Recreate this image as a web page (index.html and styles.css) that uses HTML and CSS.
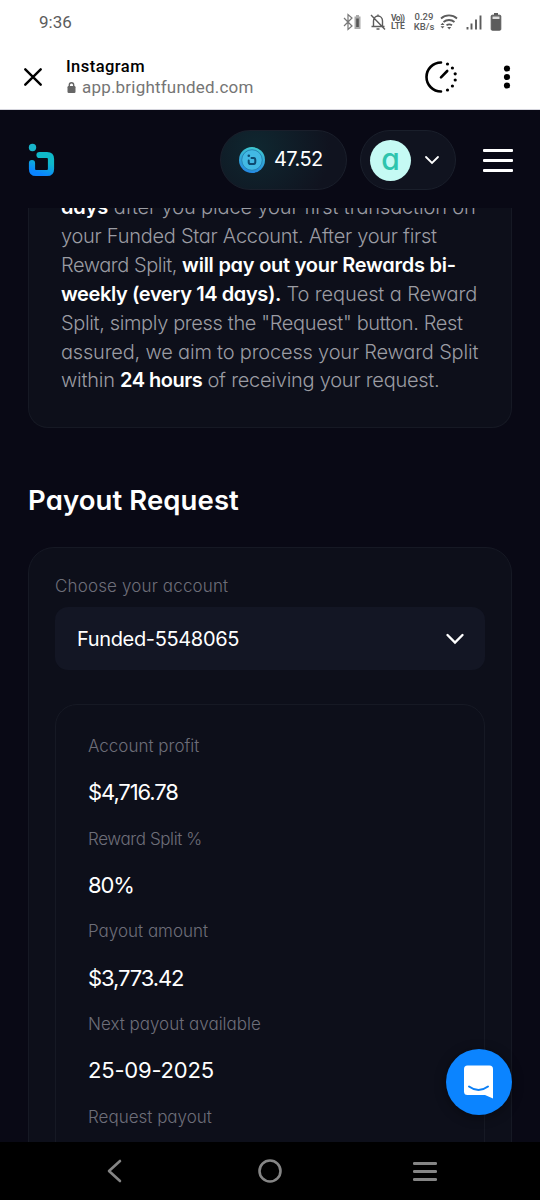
FILE: index.html
```html
<!DOCTYPE html>
<html lang="en">
<head>
    <meta charset="UTF-8">
    <meta name="viewport" content="width=device-width, initial-scale=1.0">
    <title>BrightFunded - Payout Request</title>
    <link rel="stylesheet" href="styles.css">
</head>
<body>

<div class="status-bar">
    <span class="clock">9:36</span>
    <div class="status-icons">
        <svg class="bt" width="18" height="18" viewBox="0 0 18 18">
            <path d="M1 5l8 8-4 3.500V1.500L9 5l-8 8" fill="none" stroke="#777" stroke-width="1.200"/>
            <path d="M13 2h3v1.500h1.500v12.500h-6V3.500H13z" fill="#aaa"/>
            <rect x="13.200" y="5.500" width="2.600" height="8.500" fill="#555"/>
        </svg>
        <svg class="bell" width="16" height="18" viewBox="0 0 16 18">
            <path d="M3.500 13V8c0-3 2-5 4.500-5s4.500 2 4.500 5v5M1.500 13.500h13M8 3V1.500M6.500 16h3M1 2l14 14.500" fill="none" stroke="#5c5c5c" stroke-width="1.400"/>
        </svg>
        <span class="volte"><span>Vo))</span><br>LTE</span>
        <span class="speed">0.29<br>KB/s</span>
        <svg class="wifi" width="18" height="16" viewBox="0 0 18 16">
            <g fill="none" stroke="#5c5c5c" stroke-width="1.800">
                <path d="M1 4.500a12 12 0 0 1 16 0M3.500 8a8.500 8.500 0 0 1 11 0M6.500 11.300a5 5 0 0 1 5.500 0"/>
            </g>
            <path d="M7.200 13h4l-2 2.500z M.5 11L2.500 8.700 4.500 11z M.5 12.200h4L2.500 14.500z" fill="#5c5c5c"/>
        </svg>
        <svg class="signal" width="16" height="15" viewBox="0 0 16 15">
            <path d="M1.500 12v2.500M5.500 8.500v6M10 4.500v10M14.500 .5v14" stroke="#5c5c5c" stroke-width="1.900"/>
        </svg>
        <svg class="battery" width="12" height="18" viewBox="0 0 12 18">
            <path d="M4 0h4v2H4z" fill="#5c5c5c"/>
            <rect x="1.200" y="2.200" width="9.600" height="15" rx="1" fill="#5c5c5c" stroke="#5c5c5c"/>
            <path d="M2.500 3.500h7v2.500h-7z" fill="#ddd"/>
        </svg>
    </div>
</div>

<div class="browser-bar">
    <svg class="close" width="18" height="18" viewBox="0 0 18 18">
        <path d="M1.300 1.300l15.400 15.400M16.700 1.300L1.300 16.700" stroke="#000" stroke-width="2.400" stroke-linecap="round"/>
    </svg>
    <div class="site">
        <div class="site-name">Instagram</div>
        <div class="site-url">
            <svg width="9" height="11" viewBox="0 0 9 11">
                <rect x=".5" y="4" width="8" height="7" rx="1.200" fill="#666"/>
                <path d="M2.300 5V3a2.200 2.200 0 0 1 4.400 0v2" fill="none" stroke="#666" stroke-width="1.400"/>
            </svg>
            <span>app.brightfunded.com</span>
        </div>
    </div>
    <svg class="gauge" width="34" height="34" viewBox="0 0 34 34">
        <path d="M17 2.500A14.500 14.500 0 0 0 17 31.500M17 17.300l6.200-6.300" fill="none" stroke="#000" stroke-width="2.600" stroke-linecap="round"/>
        <g fill="#000">
            <circle cx="23.500" cy="4" r="1.600"/>
            <circle cx="28.400" cy="8" r="1.600"/>
            <circle cx="31.200" cy="13.800" r="1.600"/>
            <circle cx="31.200" cy="20" r="1.600"/>
            <circle cx="28.400" cy="26" r="1.600"/>
            <circle cx="23.500" cy="30" r="1.600"/>
        </g>
    </svg>
    <svg class="dots" width="8" height="24" viewBox="0 0 8 24">
        <circle cx="4" cy="3.500" r="3.100"/>
        <circle cx="4" cy="12" r="3.100"/>
        <circle cx="4" cy="20.500" r="3.100"/>
    </svg>
</div>

<header class="header">
    <svg class="logo" width="27" height="34" viewBox="0 0 27 34">
        <defs>
            <linearGradient id="brand" x1="0.700" y1="0" x2="0.300" y2="1">
                <stop offset="0.300" stop-color="#0fb9c9"/>
                <stop offset="1" stop-color="#0a84ff"/>
            </linearGradient>
        </defs>
        <circle cx="4.500" cy="4.500" r="3.700" fill="#18b5cb"/>
        <path d="M11.500 12H19q4 0 4 4v10q0 4-4 4H8q-4 0-4-4v-6" fill="none" stroke="url(#brand)" stroke-width="6.200" stroke-linecap="round"/>
    </svg>

    <div class="pill coins">
        <svg width="26" height="26" viewBox="0 0 26 26">
            <defs>
                <linearGradient id="coin" x1="0.600" y1="0" x2="0.400" y2="1">
                    <stop offset="0" stop-color="#3fc9cf"/>
                    <stop offset="1" stop-color="#2487e2"/>
                </linearGradient>
            </defs>
            <circle cx="13" cy="13" r="13" fill="url(#coin)"/>
            <circle cx="13" cy="13" r="10.300" fill="#42b9e4" stroke="#2785b5" stroke-width="1"/>
            <circle cx="9.800" cy="8.700" r="1.300" fill="#0d4a70"/>
            <path d="M12.500 11h2q1.800 0 1.800 1.800v2.400q0 1.800-1.800 1.800h-3q-1.800 0-1.800-1.800v-1.600" fill="none" stroke="#0d4a70" stroke-width="2" stroke-linecap="round"/>
        </svg>
        <span>47.52</span>
    </div>

    <div class="pill user">
        <span class="avatar">a</span>
        <svg width="16" height="10" viewBox="0 0 16 10">
            <path d="M2 2l6 6 6-6" fill="none" stroke="#fff" stroke-width="1.800" stroke-linecap="round"/>
        </svg>
    </div>

    <div class="menu">
        <span></span>
        <span></span>
        <span></span>
    </div>
</header>

<main class="content">
    <section class="card info">
        <p class="l1"><b>days</b> after you place your first transaction on</p>
        <p class="l2">your Funded Star Account. After your first</p>
        <p class="l3">Reward Split, <b>will pay out your Rewards bi-</b></p>
        <p class="l4"><b>weekly (every 14 days).</b> To request a Reward</p>
        <p class="l5">Split, simply press the "Request" button. Rest</p>
        <p class="l6">assured, we aim to process your Reward Split</p>
        <p class="l7">within <b>24 hours</b> of receiving your request.</p>
    </section>

    <h2>Payout Request</h2>

    <section class="card payout">
        <div class="field-label">Choose your account</div>
        <div class="select">
            <span>Funded-5548065</span>
            <svg width="20" height="14" viewBox="0 0 20 14">
                <path d="M2.500 3l7.500 7.500L17.500 3" fill="none" stroke="#fff" stroke-width="2.400" stroke-linecap="round"/>
            </svg>
        </div>
        <dl class="details">
            <dt>Account profit</dt>
            <dd>$4,716.78</dd>
            <dt class="split">Reward Split %</dt>
            <dd>80%</dd>
            <dt>Payout amount</dt>
            <dd>$3,773.42</dd>
            <dt>Next payout available</dt>
            <dd class="date">25-09-2025</dd>
            <dt>Request payout</dt>
        </dl>
    </section>

    <div class="chat">
        <svg width="30" height="34" viewBox="0 0 30 34">
            <path d="M3.500 .5h22q3.500 0 3.500 3.500v29.500L21 30H3.500Q0 30 0 26.500V4Q0 .5 3.500 .5z" fill="#fff"/>
            <path d="M5 21.500q9.500 7 19 0" fill="none" stroke="#0b7ff5" stroke-width="2" stroke-linecap="round"/>
        </svg>
    </div>
</main>

<nav class="nav-bar">
    <svg width="24" height="24" viewBox="0 0 24 24">
        <path d="M17 2L6 12l11 10" fill="none" stroke="#858585" stroke-width="2.600" stroke-linecap="round" stroke-linejoin="round"/>
    </svg>
    <svg width="24" height="24" viewBox="0 0 24 24">
        <circle cx="12" cy="12" r="10.500" fill="none" stroke="#858585" stroke-width="2.600"/>
    </svg>
    <svg width="24" height="24" viewBox="0 0 24 24">
        <path d="M1.300 4.500h21.400M1.300 12.500h21.400M1.300 20.500h21.400" stroke="#858585" stroke-width="2.800" stroke-linecap="round"/>
    </svg>
</nav>

</body>
</html>
```
FILE: styles.css
```css
* {
    box-sizing: border-box;
}
body {
    margin: 0;
    height: 1200px;
    display: flex;
    flex-direction: column;
    overflow: hidden;
    background: #090915;
    color: #fff;
    font-family: Inter, "Liberation Sans", sans-serif;
    font-feature-settings: "cv11";
}
svg {
    display: block;
    flex-shrink: 0;
}

/* phone status bar */
.status-bar {
    height: 44px;
    padding: 0 38px 0 39px;
    display: flex;
    align-items: center;
    justify-content: space-between;
    background: #fff;
    color: #5c5c5c;
    font-family: Roboto, sans-serif;
}
.clock {
    font-size: 17px;
}
.status-icons {
    display: flex;
    align-items: center;
}
.bell {
    margin-left: 9px;
}
.volte {
    margin-left: 5px;
    width: 16px;
    font-size: 8.5px;
    font-weight: 700;
    line-height: 8px;
}
.volte span {
    letter-spacing: -0.7px;
}
.speed {
    margin-left: 6px;
    width: 22px;
    font-size: 9.5px;
    font-weight: 500;
    line-height: 10px;
    text-align: center;
    white-space: nowrap;
}
.wifi {
    margin-left: 5px;
}
.signal {
    margin-left: 8px;
}
.battery {
    margin-left: 8px;
}

/* in-app browser bar */
.browser-bar {
    height: 66px;
    padding: 0 29px 0 24px;
    display: flex;
    align-items: center;
    background: #fff;
    border-bottom: 1px solid #d5d5dd;
    color: #000;
    font-family: Roboto, sans-serif;
}
.site {
    flex: 1;
    margin-left: 24px;
}
.site-name {
    font-size: 16.5px;
    font-weight: 500;
    line-height: 21px;
    letter-spacing: 0.45px;
}
.site-url {
    display: flex;
    align-items: center;
    gap: 6px;
    padding-left: 1px;
    color: #757575;
    font-size: 17px;
    line-height: 21px;
    letter-spacing: 0.2px;
}
.dots {
    margin-left: 45px;
}

/* app header */
.header {
    height: 98px;
    flex-shrink: 0;
    padding: 2px 27px 0 28px;
    display: flex;
    align-items: center;
    background: #090915;
}
.logo {
    margin-right: auto;
}
.pill {
    height: 60px;
    display: flex;
    align-items: center;
    border: 1px solid #1a1f2b;
    border-radius: 30px;
    background: #10131f;
}
.coins {
    width: 127px;
    padding-left: 18px;
    gap: 9px;
    background: radial-gradient(circle at 28% 30%, #0f2730, #10131f 75%);
    font-size: 20px;
    line-height: 24px;
    letter-spacing: -0.6px;
}
.coins span {
    padding-bottom: 2px;
}
.user {
    width: 96px;
    margin: 0 27px 0 13px;
    padding-left: 9px;
    gap: 13px;
}
.avatar {
    width: 41px;
    height: 41px;
    border-radius: 50%;
    background: #c5faf4;
    color: #2fc4ae;
    font-size: 30px;
    font-weight: 500;
    line-height: 38px;
    text-align: center;
}
.menu {
    width: 30px;
    display: flex;
    flex-direction: column;
    gap: 7px;
}
.menu span {
    height: 3px;
    border-radius: 1px;
    background: #fff;
}

/* page */
.content {
    flex: 1;
    min-height: 0;
    overflow: hidden;
    position: relative;
    padding: 0 28px;
}
.card {
    border: 1px solid #161924;
    background: #0d0f1a;
}
.info {
    height: 235px;
    margin-top: -15px;
    padding-left: 32px;
    border-top: 0;
    border-radius: 0 0 20px 20px;
    color: #9b9ca3;
    font-size: 20px;
    font-weight: 300;
    line-height: 28.9px;
}
.info p {
    margin: 0;
    white-space: nowrap;
}
.info b {
    color: #fff;
    font-weight: 600;
}
.l1 {
    letter-spacing: -0.13px;
}
.l2 {
    letter-spacing: -0.27px;
}
.l3 {
    letter-spacing: -0.45px;
}
.l3 b {
    letter-spacing: -0.25px;
}
.l4 {
    letter-spacing: -0.1px;
}
.l4 b {
    letter-spacing: -0.4px;
}
.l5 {
    letter-spacing: -0.36px;
}
.l6 {
    letter-spacing: -0.19px;
}
.l7 {
    letter-spacing: -0.25px;
}
.l7 b {
    letter-spacing: -0.5px;
}
h2 {
    margin: 52px 0 0;
    font-size: 27.5px;
    font-weight: 600;
    line-height: 40px;
    letter-spacing: 0.1px;
}
.payout {
    margin-top: 27px;
    height: 700px;
    padding: 25px 26px 0;
    border-radius: 26px;
}
.field-label,
.details dt {
    color: #6d6e79;
    font-size: 17px;
    font-weight: 300;
}
.field-label {
    line-height: 26px;
    letter-spacing: 0.15px;
}
.select {
    height: 63px;
    margin-top: 8px;
    padding: 0 20px 0 22px;
    display: flex;
    align-items: center;
    justify-content: space-between;
    border-radius: 13px;
    background: #131624;
    font-size: 20px;
    letter-spacing: -0.35px;
}
.details {
    height: 600px;
    margin: 34px 0 0;
    padding: 18px 32px 0;
    border: 1px solid #161924;
    border-radius: 22px;
    line-height: 46.35px;
}
.details dd {
    margin: 0;
    font-size: 22px;
    letter-spacing: -1.1px;
}
.details .split {
    letter-spacing: -0.4px;
}
.details .date {
    letter-spacing: -0.2px;
}

.chat {
    position: absolute;
    right: 28px;
    bottom: 27px;
    width: 66px;
    height: 66px;
    display: flex;
    align-items: center;
    justify-content: center;
    border-radius: 50%;
    background: #0b84ff;
    box-shadow: 0 2px 12px rgba(0, 0, 0, 0.4);
}

/* android navigation */
.nav-bar {
    height: 58px;
    padding: 0 103px;
    display: flex;
    align-items: center;
    justify-content: space-between;
    background: #000;
}
```
